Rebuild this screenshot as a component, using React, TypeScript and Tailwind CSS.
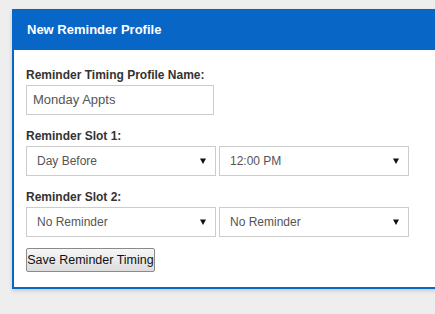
import React from "react";

function FakeSelect({ value, className }: { value: string; className?: string }) {
  return (
    <div
      className={
        "h-[30px] border border-[#cccccc] bg-white flex items-center justify-between pl-[10px] pr-[8px] text-[12px] text-[#555555] " +
        (className || "")
      }
    >
      <span>{value}</span>
      <svg width="6" height="6" viewBox="0 0 6 6" className="mr-[1px]">
        <path d="M0 0.5 H6 L3 6 Z" fill="#111111" />
      </svg>
    </div>
  );
}

export default function App() {
  return (
    <div
      className="w-[435px] h-[314px] overflow-hidden bg-[#eeeeee] pt-[9px] pl-[12px]"
      style={{ fontFamily: '"Liberation Sans", Arial, sans-serif' }}
    >
      <div className="w-[440px] bg-white border-x-2 border-b-2 border-[#0866c6] shadow-[0_2px_4px_rgba(0,0,0,0.15)]">
        <div className="h-[41px] bg-[#0866c6] -mx-[2px] flex items-center pl-[15px]">
          <span className="text-white font-bold text-[13px]">New Reminder Profile</span>
        </div>
        <div className="pl-[12px] pt-[18px] pb-[15px]">
          <div className="text-[12px] leading-[14px] font-bold text-[#333333] mb-[3px]">
            Reminder Timing Profile Name:
          </div>
          <div className="w-[188px] h-[30px] border border-[#cccccc] flex items-center pl-[6px] text-[13px] text-[#555555]">
            Monday Appts
          </div>

          <div className="mt-[14px] text-[12px] leading-[14px] font-bold text-[#333333] mb-[3px]">
            Reminder Slot 1:
          </div>
          <div className="flex gap-[3px]">
            <FakeSelect value="Day Before" className="w-[190px]" />
            <FakeSelect value="12:00 PM" className="w-[190px]" />
          </div>

          <div className="mt-[14px] text-[12px] leading-[14px] font-bold text-[#333333] mb-[3px]">
            Reminder Slot 2:
          </div>
          <div className="flex gap-[3px]">
            <FakeSelect value="No Reminder" className="w-[190px]" />
            <FakeSelect value="No Reminder" className="w-[190px]" />
          </div>

          <button className="mt-[11px] w-[129px] h-[24px] border border-[#8a8a8a] rounded-[2px] bg-gradient-to-b from-[#f6f6f6] to-[#dddddd] text-[12.5px] text-[#111111] flex items-center justify-center">
            Save Reminder Timing
          </button>
        </div>
      </div>
    </div>
  );
}
